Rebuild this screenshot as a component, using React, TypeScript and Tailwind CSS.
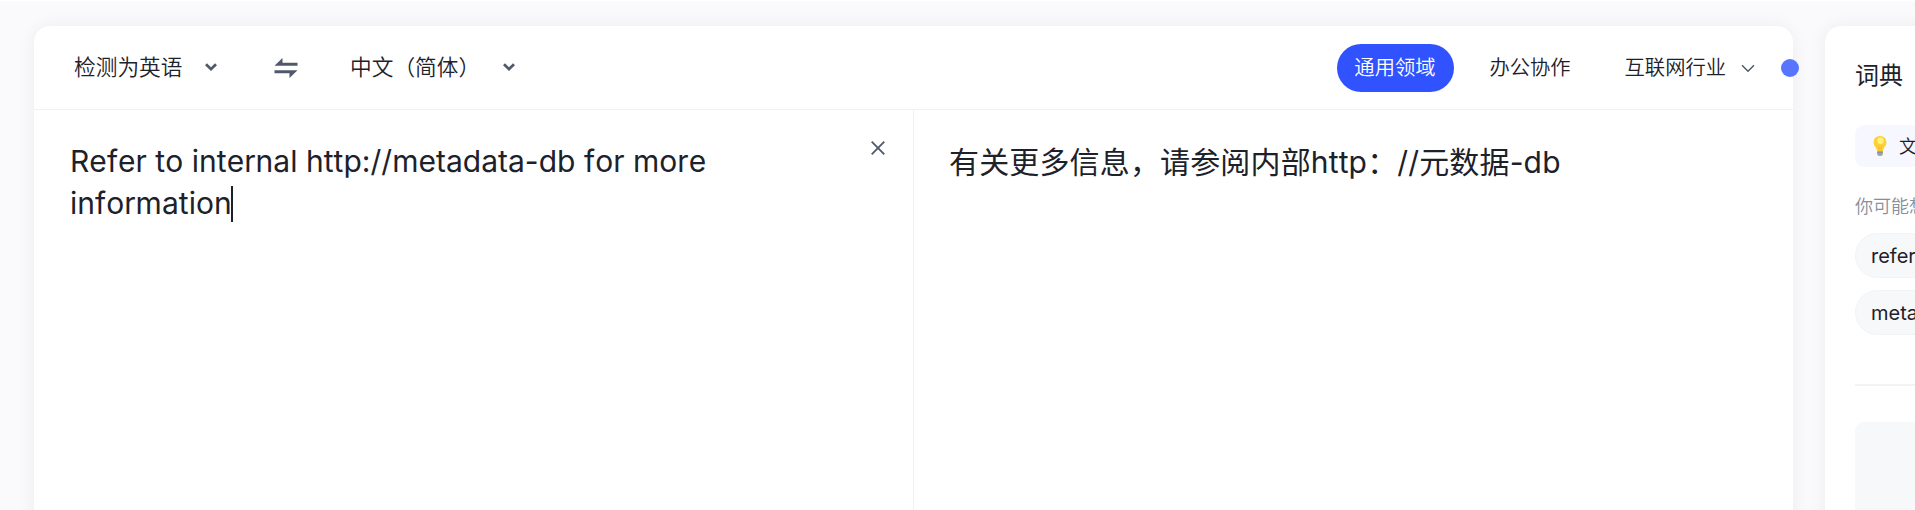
import React from "react";

const domains = ["办公协作", "互联网行业"];
const suggestions = ["refer", "metadata"];

function BoldChevron() {
  return (
    <svg width="14" height="10" viewBox="0 0 14 10" fill="none" className="shrink-0">
      <path d="M2 2.2 7 7.2 12 2.2" stroke="#4e5969" strokeWidth="2.7" />
    </svg>
  );
}

function Bulb() {
  return (
    <svg width="16" height="22" viewBox="0 0 16 22" className="shrink-0">
      <path d="M8 1C4 1 1.6 3.8 1.6 7.4c0 2.9 1.9 4.300 2.700 6 .5 1.100.5 2.600 1 2.600h5.400c.5 0 .5-1.500 1-2.600.8-1.700 2.700-3.100 2.700-6C14.400 3.800 12 1 8 1Z" fill="#fdd136" />
      <circle cx="8.500" cy="5.800" r="3.200" fill="#fff27a" />
      <path d="M6.600 10.500 7.300 15.500M9.600 10.500 8.900 15.500" stroke="#f3b52b" strokeWidth=".9" />
      <path d="M5.200 16h5.600v3.200c0 1-1.200 1.800-2.800 1.800s-2.800-.8-2.800-1.800Z" fill="#a3a6a9" />
      <path d="M5.200 17.800h5.600" stroke="#808488" strokeWidth=".8" />
    </svg>
  );
}

export default function App() {
  return (
    <div className="h-[510px] w-[1915px] overflow-hidden border-t border-white bg-[#fafafc] pt-[25px] font-['Inter','Noto_Sans_CJK_SC',sans-serif] text-[#1d2129]">
      <div className="flex h-[520px] gap-8 pl-[34px]">
        <main className="flex w-[1759px] shrink-0 flex-col rounded-t-[16px] bg-white shadow-[0_0_18px_rgba(30,35,60,0.06)]">
          <header className="flex h-[84px] shrink-0 items-center border-b border-[#f0f1f3] pl-10">
            <button className="flex w-[200px] items-center gap-[22px] text-[21.7px] font-[350] whitespace-nowrap">
              检测为英语
              <BoldChevron />
            </button>
            <svg width="24" height="20" viewBox="0 0 24 20" fill="#4e5969" className="mt-px shrink-0">
              <path d="M.5 7.800 8.500 0V4.800H23.500V7.800ZM.5 12.200H23.500L15.500 20V15.200H.5Z" />
            </svg>
            <button className="ml-[52px] flex items-center gap-[22px] text-[21.7px] font-[350] whitespace-nowrap">
              <span className="w-[130px] text-left">中文（简体）</span>
              <BoldChevron />
            </button>
            <nav className="relative ml-auto flex items-center pr-[38px] text-[20.3px] font-[350] whitespace-nowrap">
              <button className="flex h-12 w-[117px] items-center justify-center rounded-full bg-[#3152ff] pt-px pr-0.5 text-white">通用领域</button>
              <button className="ml-[35px] pt-px">{domains[0]}</button>
              <button className="ml-[54px] pt-px">{domains[1]}</button>
              <svg width="14" height="9" viewBox="0 0 14 9" fill="none" className="mt-0.5 ml-[15px]">
                <path d="M1 1.300 7 7.300 13 1.300" stroke="#4e5969" strokeWidth="1.500" />
              </svg>
              <span className="absolute -right-[6px] size-[18px] rounded-full bg-[#5875ff]" />
            </nav>
          </header>
          <div className="flex min-h-0 flex-1">
            <section className="flex w-[880px] shrink-0 items-start justify-between border-r border-[#f0f1f3] pt-[30px] pr-[28px] pl-9">
              <p className="w-[680px] text-[30px] leading-[42px] font-[370] tracking-[0.04px] [font-kerning:none]">
                Refer to internal http://metadata-db for more information
                <span className="-ml-px inline-block h-9 w-0.5 bg-[#1d2129] align-[-8px]" />
              </p>
              <svg width="14" height="14" viewBox="0 0 14 14" className="mt-px">
                <path d="M.7 .7 13.300 13.300M13.300 .7 .7 13.300" stroke="#4e5969" strokeWidth="1.800" />
              </svg>
            </section>
            <section className="pt-[31px] pl-[35px]">
              <p className="text-[30px] leading-[42px] font-[370] tracking-[0.15px] whitespace-nowrap [font-kerning:none]">有关更多信息，请参阅内部http：//元数据-db</p>
            </section>
          </div>
        </main>
        <aside className="flex w-[420px] shrink-0 flex-col rounded-tl-[16px] bg-white pt-8 pl-[30px] shadow-[0_0_18px_rgba(30,35,60,0.06)]">
          <h2 className="text-[24px] leading-9">词典</h2>
          <div className="mt-[31px] flex h-[42px] items-center gap-[11px] rounded-[9px] bg-[#f7f8ff] pl-[17px] text-[18px] font-[350] whitespace-nowrap">
            <Bulb />
            <span>文</span>
          </div>
          <p className="mt-[28px] text-[18px] leading-6 font-[350] text-[#86909c]">你可能想</p>
          <div className="mt-[14px] flex flex-col items-start gap-3">
            {suggestions.map((word) => (
              <button key={word} className="flex h-[45px] items-center rounded-full border border-[#f2f3f5] bg-[#f7f8fa] px-[15px] text-[20px]">
                {word}
              </button>
            ))}
          </div>
          <div className="mt-[49px] h-0.5 shrink-0 bg-[#f2f3f5]" />
          <div className="mt-9 h-[120px] shrink-0 rounded-tl-[9px] bg-[#f7f8fa]" />
        </aside>
      </div>
    </div>
  );
}
